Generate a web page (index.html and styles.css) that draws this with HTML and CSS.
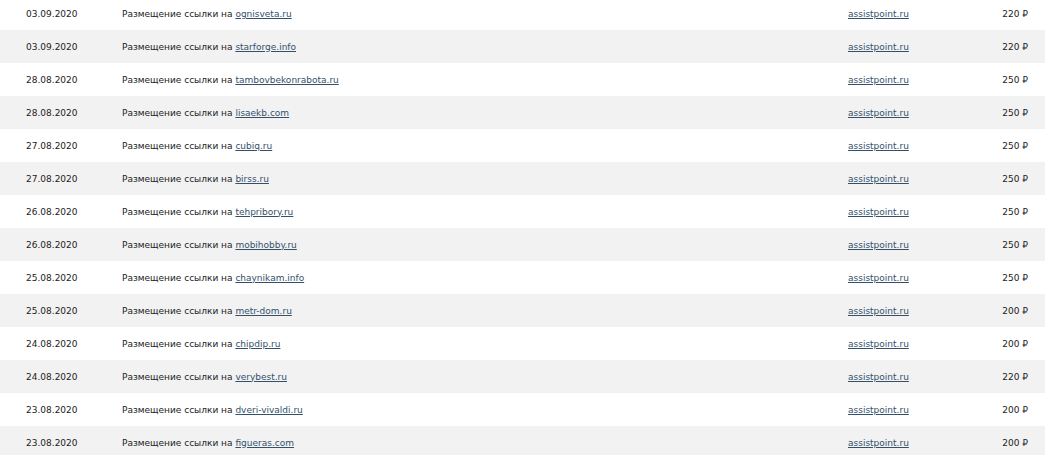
FILE: index.html
```html
<!DOCTYPE html>
<html lang="ru">
<head>
<meta charset="utf-8">
<link rel="stylesheet" href="styles.css">
</head>
<body>
<div class="list">
  <div class="row"><span class="date">03.09.2020</span><span class="desc">Размещение ссылки на <a href="#">ognisveta.ru</a></span><a class="site" href="#">assistpoint.ru</a><span class="price">220 ₽</span></div>
  <div class="row"><span class="date">03.09.2020</span><span class="desc">Размещение ссылки на <a href="#">starforge.info</a></span><a class="site" href="#">assistpoint.ru</a><span class="price">220 ₽</span></div>
  <div class="row"><span class="date">28.08.2020</span><span class="desc">Размещение ссылки на <a href="#">tambovbekonrabota.ru</a></span><a class="site" href="#">assistpoint.ru</a><span class="price">250 ₽</span></div>
  <div class="row"><span class="date">28.08.2020</span><span class="desc">Размещение ссылки на <a href="#">lisaekb.com</a></span><a class="site" href="#">assistpoint.ru</a><span class="price">250 ₽</span></div>
  <div class="row"><span class="date">27.08.2020</span><span class="desc">Размещение ссылки на <a href="#">cubiq.ru</a></span><a class="site" href="#">assistpoint.ru</a><span class="price">250 ₽</span></div>
  <div class="row"><span class="date">27.08.2020</span><span class="desc">Размещение ссылки на <a href="#">birss.ru</a></span><a class="site" href="#">assistpoint.ru</a><span class="price">250 ₽</span></div>
  <div class="row"><span class="date">26.08.2020</span><span class="desc">Размещение ссылки на <a href="#">tehpribory.ru</a></span><a class="site" href="#">assistpoint.ru</a><span class="price">250 ₽</span></div>
  <div class="row"><span class="date">26.08.2020</span><span class="desc">Размещение ссылки на <a href="#">mobihobby.ru</a></span><a class="site" href="#">assistpoint.ru</a><span class="price">250 ₽</span></div>
  <div class="row"><span class="date">25.08.2020</span><span class="desc">Размещение ссылки на <a href="#">chaynikam.info</a></span><a class="site" href="#">assistpoint.ru</a><span class="price">250 ₽</span></div>
  <div class="row"><span class="date">25.08.2020</span><span class="desc">Размещение ссылки на <a href="#">metr-dom.ru</a></span><a class="site" href="#">assistpoint.ru</a><span class="price">200 ₽</span></div>
  <div class="row"><span class="date">24.08.2020</span><span class="desc">Размещение ссылки на <a href="#">chipdip.ru</a></span><a class="site" href="#">assistpoint.ru</a><span class="price">200 ₽</span></div>
  <div class="row"><span class="date">24.08.2020</span><span class="desc">Размещение ссылки на <a href="#">verybest.ru</a></span><a class="site" href="#">assistpoint.ru</a><span class="price">220 ₽</span></div>
  <div class="row"><span class="date">23.08.2020</span><span class="desc">Размещение ссылки на <a href="#">dveri-vivaldi.ru</a></span><a class="site" href="#">assistpoint.ru</a><span class="price">200 ₽</span></div>
  <div class="row"><span class="date">23.08.2020</span><span class="desc">Размещение ссылки на <a href="#">figueras.com</a></span><a class="site" href="#">assistpoint.ru</a><span class="price">200 ₽</span></div>
</div>
</body>
</html>
```
FILE: styles.css
```css
html, body {
  margin: 0;
  padding: 0;
  background: #ffffff;
}
body {
  font-family: "DejaVu Sans", Verdana, sans-serif;
  font-size: 9px;
  color: #222222;
  overflow: hidden;
}
.list {
  margin-top: -3px;
}
.row {
  display: grid;
  grid-template-columns: 96px 726px 1fr auto;
  align-items: center;
  height: 33px;
  padding: 0 17px 0 26px;
}
.row:nth-child(even) {
  background: #f2f2f2;
}
a {
  color: #34506b;
  text-decoration: underline;
}
.price {
  text-align: right;
  white-space: nowrap;
}
.site {
  justify-self: start;
}
```
